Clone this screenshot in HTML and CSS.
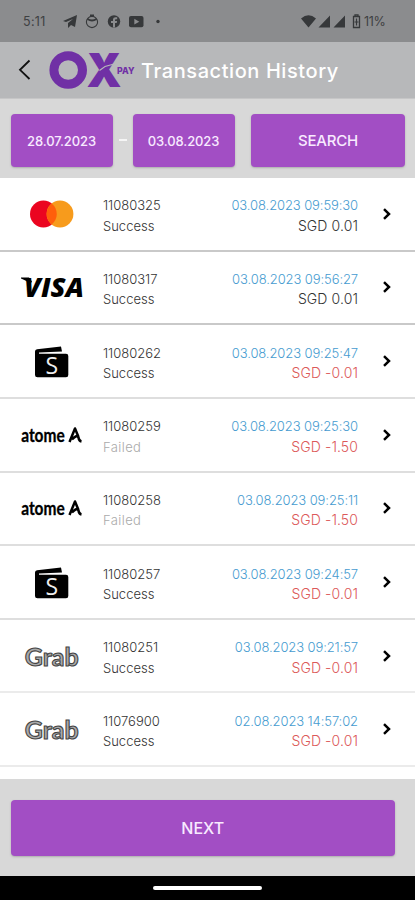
FILE: index.html
```html
<!DOCTYPE html>
<html lang="en">
<head>
<meta charset="utf-8">
<title>Transaction History</title>
<link rel="stylesheet" href="styles.css">
</head>
<body>
<svg class="defs" aria-hidden="true">
  <symbol id="mastercard" viewBox="0 0 70 40"><circle cx="28.4" cy="20" r="13.4" fill="#eb0520"/><circle cx="45" cy="20" r="13.4" fill="#f79b1c"/><path d="M36.7 9.5a13.4 13.4 0 0 1 0 21a13.4 13.4 0 0 1 0-21Z" fill="#ff5f0b"/></symbol>
  <symbol id="visa" viewBox="0 0 70 40"><text class="visa-text" x="9" y="29.5" textLength="60" lengthAdjust="spacingAndGlyphs">VISA</text><path d="M6 10.5h8l3 4-2 3q-3-4-9-6Z"/></symbol>
  <symbol id="wallet" viewBox="0 0 70 40"><path d="M20 10.5Q20 8.5 22 8.3L46 5.6 47 10.4 24 11.4V12.8H51Q53.3 12.8 53.3 15V34Q53.3 36.3 51 36.3H22.5Q20 36.3 20 34Z"/><text class="wallet-text" x="36.8" y="33" text-anchor="middle">S</text></symbol>
  <symbol id="atome" viewBox="0 0 70 40"><text class="atome-text" x="6.2" y="27.2" textLength="43.5" lengthAdjust="spacingAndGlyphs">atome</text><path d="M54.5 27 60 13.5 63.5 22M57 24.5Q62 19 63.5 22.5Q64 26 66.5 26.5" fill="none" stroke="#000" stroke-width="2.5" stroke-linejoin="round"/></symbol>
  <symbol id="grab" viewBox="0 0 70 40"><text class="grab-text" x="9.7" y="29.5" textLength="54" lengthAdjust="spacingAndGlyphs">Grab</text></symbol>
  <symbol id="chevron" viewBox="0 0 10 14"><path d="M2 2.2 7 7 2 11.8" fill="none" stroke="#000" stroke-width="2.5"/></symbol>
</svg>
<main class="screen">
  <div class="status">
    <span class="clock">5:11</span>
    <svg class="notifications" viewBox="0 0 100 20">
      <path d="M0 10 14 4 12 16 8 14 5 17 5 12 10 8 3 11Z"/>
      <g fill="none" stroke="#36383a"><circle cx="29" cy="11" r="5.6" stroke-width="1.1"/><path d="M24.5 8Q29 11 33.5 8M27 4.5h4" stroke-width="1.8"/></g>
      <circle cx="51" cy="10.5" r="6.2"/><path d="M50 16.5V12h-2v-2h2V8.5q0-2.2 2.5-2.2h1.7v1.9h-1.3q-.9 0-.9.9v.9h2.1l-.4 2H52v4.5Z" fill="#8b8c8e"/>
      <rect x="66" y="5" width="14.5" height="11.3" rx="2"/><path d="m71.3 7.8 5 2.9-5 2.9Z" fill="#8b8c8e"/>
      <circle cx="95" cy="10.5" r="1.7"/>
    </svg>
    <svg class="signals" viewBox="0 0 60 20">
      <path d="M0 7.5Q7.5 1 15 7.5L7.5 16.5ZM17.5 16.5 29 4.5V16.5ZM32.5 16.5 44 4.5V16.5Z"/>
      <path d="M52.5 5.5h6v11h-6ZM54 5V3.8h3V5" fill="none" stroke="#36383a" stroke-width="1.3"/><path d="M55.5 7.5v7M53.5 11h4" stroke="#36383a" stroke-width="1.2"/>
    </svg>
    <span class="battery">11%</span>
  </div>
  <header class="appbar">
    <svg class="back" viewBox="0 0 14 22"><path d="M11.5 1.5 2 10.8 11.5 20" fill="none" stroke="#111" stroke-width="1.8"/></svg>
    <svg class="logo" viewBox="0 0 88 42">
      <circle cx="19.2" cy="22" r="14.3" fill="none" stroke="#7030a5" stroke-width="9"/>
      <text class="logo-x" x="37.5" y="38.5" textLength="35" lengthAdjust="spacingAndGlyphs">X</text>
      <path d="M50.5 22.5 56 18.5 65 16" stroke="#b7b8ba" stroke-width="1.1" fill="none"/>
      <text class="logo-pay" x="68" y="25.5" textLength="17.5" lengthAdjust="spacingAndGlyphs">PAY</text>
    </svg>
    <h1 class="title">Transaction History</h1>
  </header>
  <section class="filters">
    <button class="btn date">28.07.2023</button>
    <span class="dash"></span>
    <button class="btn date">03.08.2023</button>
    <button class="btn search">SEARCH</button>
  </section>
  <section class="list">
    <article class="row dark"><svg class="brand"><use href="#mastercard"/></svg><div class="info"><span class="id">11080325</span><span class="state">Success</span></div><div class="amounts"><span class="time">03.08.2023 09:59:30</span><span class="sum">SGD 0.01</span></div><svg class="go"><use href="#chevron"/></svg></article>
    <article class="row dark"><svg class="brand"><use href="#visa"/></svg><div class="info"><span class="id">11080317</span><span class="state">Success</span></div><div class="amounts"><span class="time">03.08.2023 09:56:27</span><span class="sum">SGD 0.01</span></div><svg class="go"><use href="#chevron"/></svg></article>
    <article class="row"><svg class="brand"><use href="#wallet"/></svg><div class="info"><span class="id">11080262</span><span class="state">Success</span></div><div class="amounts"><span class="time">03.08.2023 09:25:47</span><span class="sum minus">SGD -0.01</span></div><svg class="go"><use href="#chevron"/></svg></article>
    <article class="row"><svg class="brand"><use href="#atome"/></svg><div class="info"><span class="id">11080259</span><span class="state failed">Failed</span></div><div class="amounts"><span class="time">03.08.2023 09:25:30</span><span class="sum minus">SGD -1.50</span></div><svg class="go"><use href="#chevron"/></svg></article>
    <article class="row"><svg class="brand"><use href="#atome"/></svg><div class="info"><span class="id">11080258</span><span class="state failed">Failed</span></div><div class="amounts"><span class="time">03.08.2023 09:25:11</span><span class="sum minus">SGD -1.50</span></div><svg class="go"><use href="#chevron"/></svg></article>
    <article class="row"><svg class="brand"><use href="#wallet"/></svg><div class="info"><span class="id">11080257</span><span class="state">Success</span></div><div class="amounts"><span class="time">03.08.2023 09:24:57</span><span class="sum minus">SGD -0.01</span></div><svg class="go"><use href="#chevron"/></svg></article>
    <article class="row light"><svg class="brand"><use href="#grab"/></svg><div class="info"><span class="id">11080251</span><span class="state">Success</span></div><div class="amounts"><span class="time">03.08.2023 09:21:57</span><span class="sum minus">SGD -0.01</span></div><svg class="go"><use href="#chevron"/></svg></article>
    <article class="row light"><svg class="brand"><use href="#grab"/></svg><div class="info"><span class="id">11076900</span><span class="state">Success</span></div><div class="amounts"><span class="time">02.08.2023 14:57:02</span><span class="sum minus">SGD -0.01</span></div><svg class="go"><use href="#chevron"/></svg></article>
  </section>
  <footer class="footer"><button class="btn next">NEXT</button></footer>
  <div class="navbar"><span class="pill"></span></div>
</main>
</body>
</html>
```
FILE: styles.css
```css
* { box-sizing: border-box; }
body { margin: 0; font-family: Inter, "Open Sans", sans-serif; }
.defs { display: none; }
.screen { width: 415px; height: 900px; display: flex; flex-direction: column; overflow: hidden; background: #fff; }
.status { height: 42px; flex: none; display: flex; align-items: center; padding: 0 28px 0 23px; background: #8b8c8e; color: #3e4042; font-size: 12.5px; fill: #36383a; }
.clock { width: 40px; letter-spacing: .3px; }
.notifications { width: 100px; height: 20px; }
.signals { width: 60px; height: 20px; margin-left: auto; }
.battery { width: 23px; margin-left: 3px; letter-spacing: -.3px; white-space: nowrap; }
.appbar { height: 56px; flex: none; display: flex; align-items: center; padding-left: 18px; background: #b7b8ba; }
.back { width: 14px; height: 22px; }
.logo { width: 88px; height: 42px; margin: -2px 0 0 17px; overflow: visible; }
.logo-x { font: 900 47px Inter, sans-serif; fill: #7030a5; }
.logo-pay { font: 800 8.5px Inter, sans-serif; fill: #7030a5; }
.title { margin: 2px 0 0 4px; color: #fff; font-size: 20px; font-weight: 500; letter-spacing: .58px; white-space: nowrap; }
.filters { height: 80px; flex: none; display: flex; align-items: flex-start; padding: 15px 10px 0 10.5px; background: #d8d8d8; border-top: 1px solid #c6c6c7; }
.btn { border: 0; border-radius: 4px; padding: 0; color: #f8eaff; background: #a24ec4; font-family: inherit; font-weight: 500; box-shadow: 0 1px 2px #8888; }
.date { width: 102px; height: 53px; font-size: 13px; letter-spacing: -.1px; }
.dash { width: 8px; height: 2px; margin: 25px 6px 0; background: #f5f5f5; }
.search { width: 154px; height: 53px; margin-left: auto; font-size: 15px; letter-spacing: -.2px; }
.list { height: 601px; flex: none; overflow: hidden; background: #fff; }
.row { height: 73.65px; display: flex; align-items: center; border-bottom: 2px solid #dedede; }
.dark { border-color: #c9c9c9; }
.light { border-color: #ebebeb; }
.brand { width: 70px; height: 40px; margin-left: 15px; }
.info { width: 90px; margin: 4px 0 0 18px; display: flex; flex-direction: column; }
.info span, .amounts span { height: 20.5px; line-height: 20.5px; font-size: 13px; font-weight: 300; color: #333; white-space: nowrap; }
.info .id { letter-spacing: 0; }
.info .failed { color: #aaa; letter-spacing: .4px; }
.amounts { width: 165px; margin-top: 4px; display: flex; flex-direction: column; align-items: flex-end; }
.amounts .time { color: #469bd0; letter-spacing: -.1px; }
.amounts .sum { font-size: 14px; letter-spacing: .1px; }
.amounts .minus { color: #dc5959; }
.go { width: 10px; height: 14px; margin-left: 24px; }
.visa-text { font: italic 800 26px "Open Sans", sans-serif; }
.wallet-text { font: 400 23px "Open Sans", sans-serif; fill: #eee; }
.atome-text { font: 700 18px Lato, sans-serif; stroke: #000; stroke-width: .3px; }
.grab-text { font: 700 25px Lato, sans-serif; fill: #aaa; stroke: #454545; stroke-width: 1.1px; }
.footer { height: 97px; flex: none; padding: 21px 20px 0 10.5px; background: #d8d8d8; }
.next { width: 384.5px; height: 56px; display: block; font-size: 16px; letter-spacing: 0; }
.navbar { height: 24px; flex: none; display: flex; justify-content: center; padding-top: 10px; background: #000; }
.pill { width: 109px; height: 4px; border-radius: 2px; background: #fff; }
```
